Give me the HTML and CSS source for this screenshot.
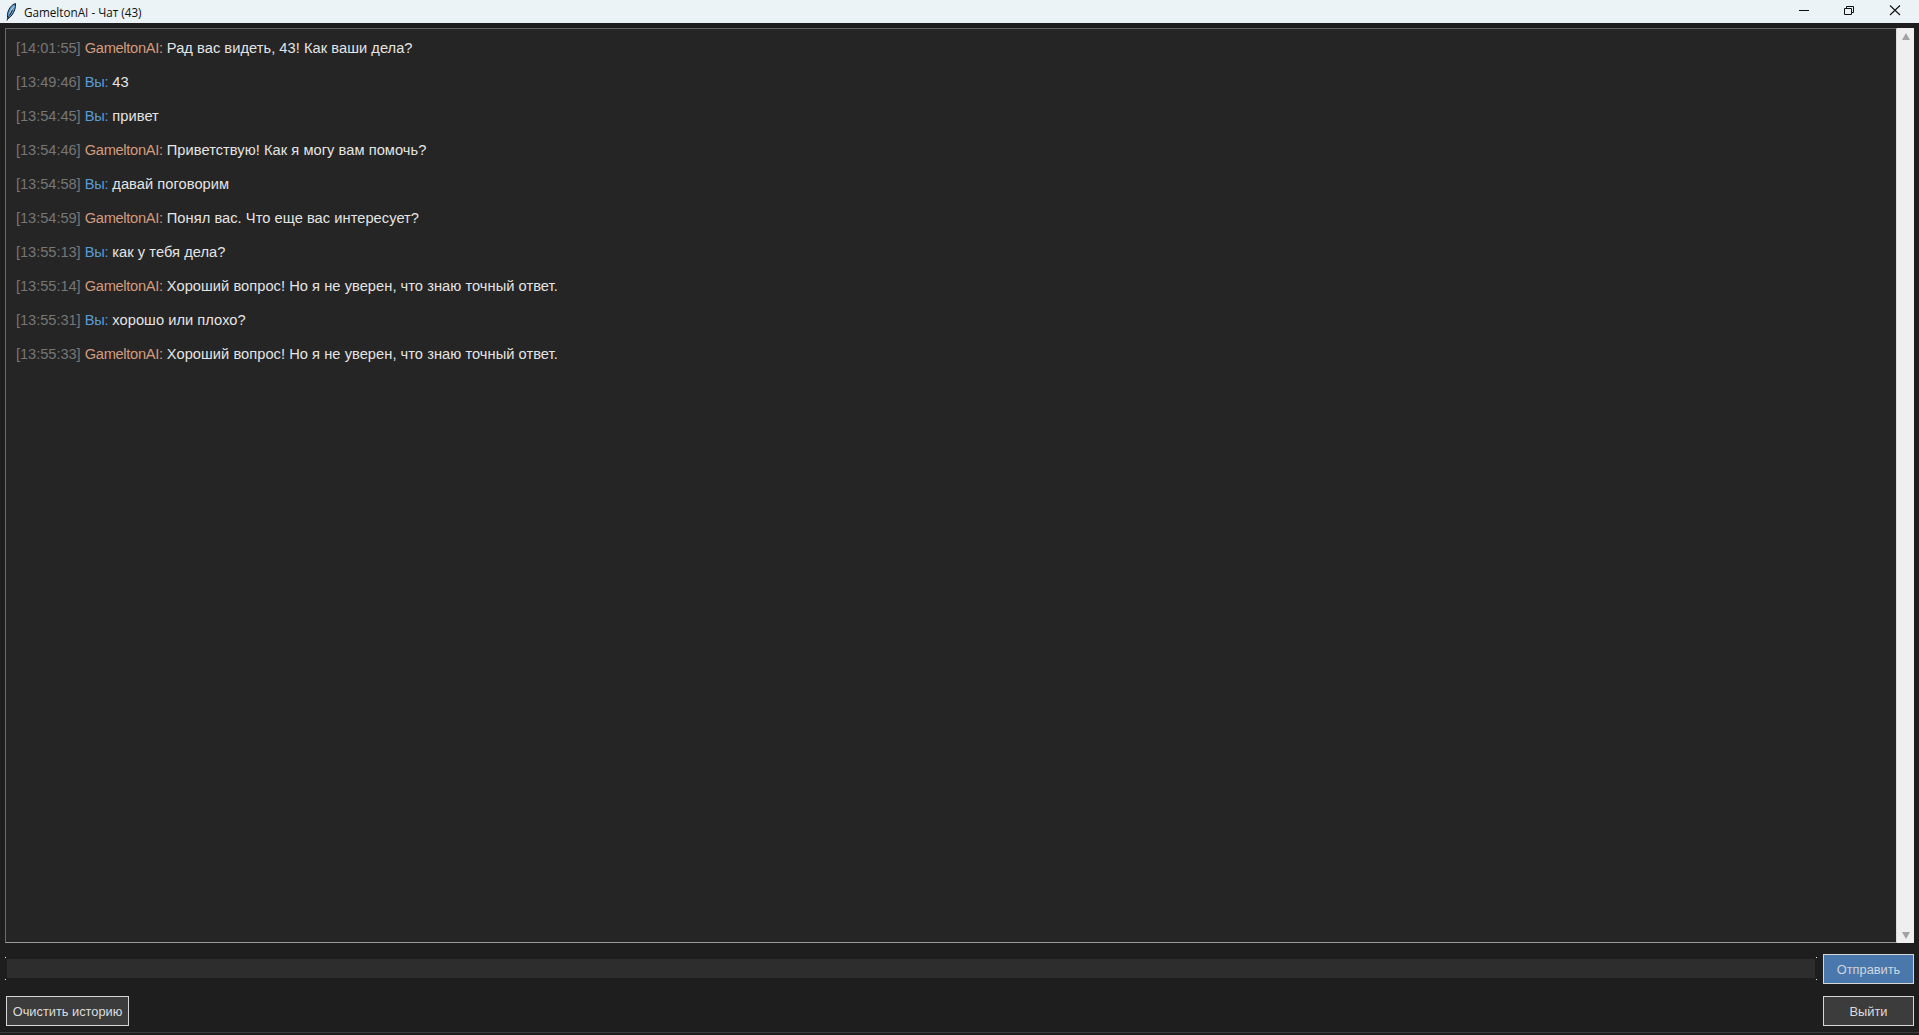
FILE: index.html
```html
<!DOCTYPE html>
<html lang="ru">
<head>
<meta charset="utf-8">
<title>GameltonAI - Чат (43)</title>
<link rel="stylesheet" href="styles.css">
</head>
<body>
<div class="window">
  <header class="titlebar">
    <svg class="feather" viewBox="0 0 12 20" width="12" height="20" aria-hidden="true">
      <path d="M10.500 1.500C7 2.500 4 6 2.800 10.500C2.200 13 2.300 15 3 16.500C6 15 8.500 11.500 9.800 7.500C10.400 5.500 10.700 3.500 10.500 1.500Z" fill="#5b9bd0" stroke="#14202c" stroke-width="1"/>
      <path d="M9 4.500C7 6.500 5.500 9 4.800 12" stroke="#cfe3f2" stroke-width="1" fill="none"/>
      <path d="M7.500 8L4.500 13.500M3.500 14.500L2 18.500" stroke="#14202c" stroke-width="1" fill="none"/>
    </svg>
    <span class="title">GameltonAI - Чат (43)</span>
    <div class="controls">
      <svg class="ctl" viewBox="0 0 46 23"><path d="M18 10.500h10" stroke="#111" stroke-width="1" fill="none"/></svg>
      <svg class="ctl" viewBox="0 0 46 23"><path d="M17.500 8.500h7v6h-7zM19.500 8.500v-2h7v6h-2" stroke="#111" stroke-width="1" fill="none"/></svg>
      <svg class="ctl" viewBox="0 0 46 23"><path d="M17 5.500l10 9.500M27 5.500L17 15" stroke="#111" stroke-width="1.100" fill="none"/></svg>
    </div>
  </header>
  <main class="content">
    <section class="chat-row">
      <div class="log">
        <p class="msg"><span class="time">[14:01:55]</span> <span class="bot">GameltonAI:</span> Рад вас видеть, 43! Как ваши дела?</p>
        <p class="msg"><span class="time">[13:49:46]</span> <span class="you">Вы:</span> 43</p>
        <p class="msg"><span class="time">[13:54:45]</span> <span class="you">Вы:</span> привет</p>
        <p class="msg"><span class="time">[13:54:46]</span> <span class="bot">GameltonAI:</span> Приветствую! Как я могу вам помочь?</p>
        <p class="msg"><span class="time">[13:54:58]</span> <span class="you">Вы:</span> давай поговорим</p>
        <p class="msg"><span class="time">[13:54:59]</span> <span class="bot">GameltonAI:</span> Понял вас. Что еще вас интересует?</p>
        <p class="msg"><span class="time">[13:55:13]</span> <span class="you">Вы:</span> как у тебя дела?</p>
        <p class="msg"><span class="time">[13:55:14]</span> <span class="bot">GameltonAI:</span> Хороший вопрос! Но я не уверен, что знаю точный ответ.</p>
        <p class="msg"><span class="time">[13:55:31]</span> <span class="you">Вы:</span> хорошо или плохо?</p>
        <p class="msg"><span class="time">[13:55:33]</span> <span class="bot">GameltonAI:</span> Хороший вопрос! Но я не уверен, что знаю точный ответ.</p>
      </div>
      <div class="scrollbar">
        <span class="arrow up"></span>
        <span class="arrow down"></span>
      </div>
    </section>
    <section class="input-row">
      <div class="entry-wrap"><input class="entry" type="text" aria-label="Сообщение"></div>
      <button class="btn send">Отправить</button>
    </section>
    <section class="actions-row">
      <button class="btn clear">Очистить историю</button>
      <button class="btn exit">Выйти</button>
    </section>
  </main>
</div>
</body>
</html>
```
FILE: styles.css
```css
* { box-sizing: border-box; }
html, body { margin: 0; padding: 0; height: 100%; overflow: hidden; }
body { font-family: "Liberation Sans", Arial, sans-serif; background: #1e1e1e; }
.window { display: flex; flex-direction: column; height: 1035px; }
.titlebar {
  height: 23px; flex: none; display: flex; align-items: center;
  background: #ebf3f7; color: #111; font-family: "Open Sans", "Noto Sans", sans-serif; font-size: 11.7px;
  padding-left: 5px;
}
.feather { flex: none; margin-right: 7px; }
.title { flex: 1; white-space: nowrap; padding-top: 1px; }
.controls { display: flex; }
.ctl { width: 46px; height: 23px; display: block; }
.content {
  flex: 1; display: flex; flex-direction: column;
  padding: 5px 5px 9px 5px; position: relative;
}
.content::after {
  content: ""; position: absolute; left: 0; right: 0; bottom: 2px; height: 1px; background: #3c3c3c;
}
.chat-row { display: flex; height: 915px; flex: none; }
.log {
  flex: 1; background: #252525; padding: 10px 0 0 10px;
  border: 1px solid #7a7a7a; border-top-color: #666; border-left-color: #6a6a6a;
  border-right-color: #ddd; border-bottom-color: #9a9a9a;
  font-size: 14.67px; color: #e4e4e4; letter-spacing: 0.04px;
}
.msg { margin: 0 0 16px; line-height: 18px; height: 18px; white-space: pre-wrap; }
.time { color: #767676; letter-spacing: -0.06px; }
.bot { color: #d49a7c; letter-spacing: -0.32px; }
.you { color: #5a9bd5; letter-spacing: -0.3px; }
.scrollbar {
  width: 17px; background: #efefef; flex: none;
  display: flex; flex-direction: column; justify-content: space-between; align-items: center;
  padding: 5px 0 4px;
}
.arrow { width: 0; height: 0; border-left: 4px solid transparent; border-right: 4px solid transparent; }
.arrow.up { border-bottom: 7px solid #a3a3a3; }
.arrow.down { border-top: 7px solid #a3a3a3; }
.input-row { display: flex; align-items: flex-start; margin-top: 11px; height: 30px; flex: none; }
.entry-wrap {
  flex: 1; margin: 3px 6px 0 0; padding: 2px;
  background:
    linear-gradient(#eee, #eee) left top / 1px 1px no-repeat,
    linear-gradient(#eee, #eee) right top / 1px 1px no-repeat,
    linear-gradient(#eee, #eee) left bottom / 1px 1px no-repeat,
    linear-gradient(#eee, #eee) right bottom / 1px 1px no-repeat;
}
.entry { display: block; width: 100%; height: 19px; background: #2d2d2d; border: 0; padding: 0; outline: 0; color: #eee; }
.btn {
  font-family: "Liberation Sans", Arial, sans-serif; font-size: 12.8px; color: #dcdcdc;
  background: #3c3c3c; border: 1px solid #d6d6d6; height: 30px; padding: 0; flex: none;
}
.send { width: 91px; background: #4a78ac; color: #cfd6de; }
.actions-row { display: flex; justify-content: space-between; margin-top: 12px; height: 30px; flex: none; padding-left: 1px; }
.clear { width: 123px; }
.exit { width: 91px; }
```
